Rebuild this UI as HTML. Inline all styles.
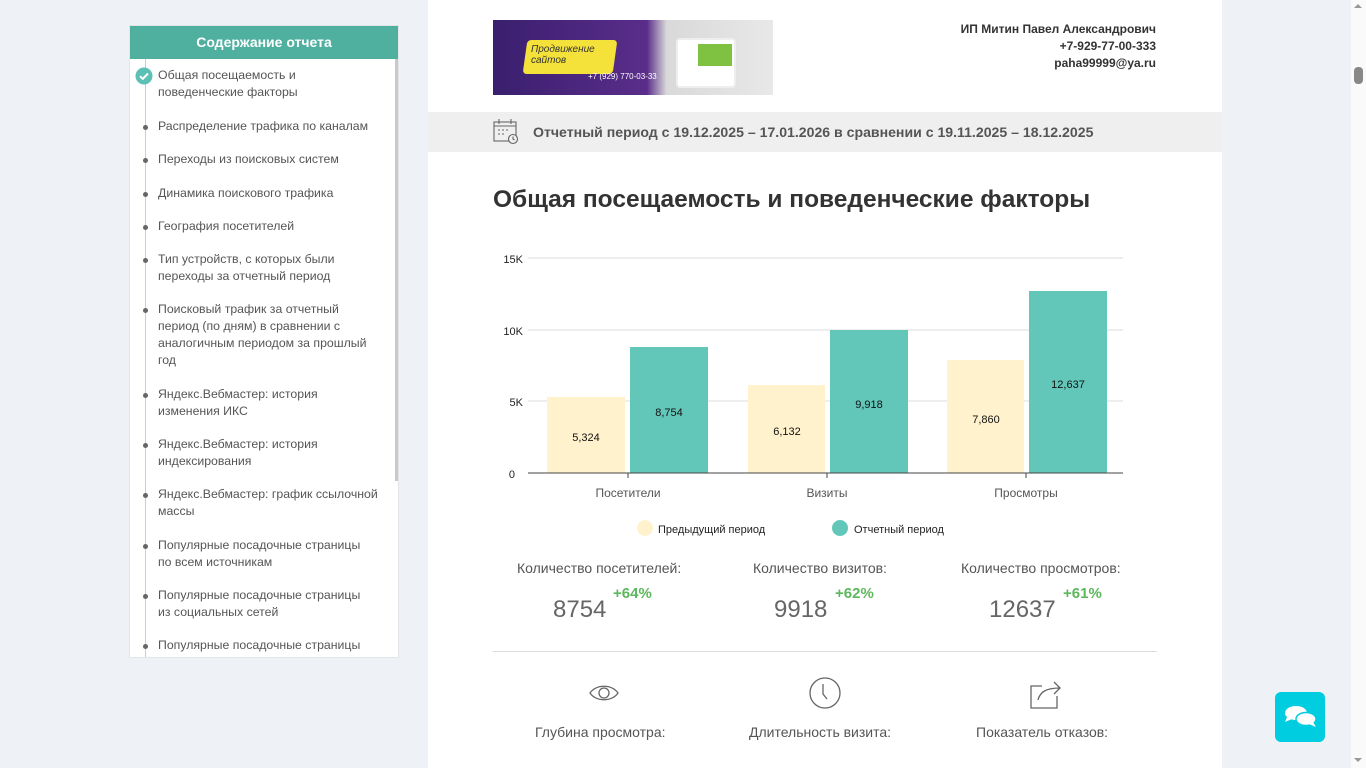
<!DOCTYPE html>
<html><head><meta charset="utf-8">
<style>
*{margin:0;padding:0;box-sizing:border-box}
body{width:1366px;height:768px;overflow:hidden;background:#eef2f7;font-family:"Liberation Sans","DejaVu Sans",sans-serif;position:relative;color:#444}
.abs{position:absolute}
#side{left:129px;top:25px;width:270px;height:633px;background:#fff;border:1px solid #e2e6ea;overflow:hidden}
#side .hd{height:33px;background:#4fb0a0;color:#fff;font-weight:bold;font-size:14px;text-align:center;line-height:33px}
#side .vl{left:15px;top:33px;width:1px;height:600px;background:#ccc}
#side .sb{left:265px;top:33px;width:4px;height:422px;background:#c9c9c9}
.it{position:absolute;left:28px;font-size:12.3px;line-height:17px;color:#555;width:232px}
.it:before{content:"";position:absolute;left:-15px;top:7px;width:5px;height:5px;border-radius:50%;background:#666}
.it.ck:before{display:none}
#main{left:428px;top:0;width:794px;height:768px;background:#fff}
.chat{left:1275px;top:692px;width:50px;height:50px;border-radius:6px;background:#00cde0}
#scroll{left:1351px;top:0;width:15px;height:768px;background:#fafafa}
</style></head><body>
<div id="side" class="abs">
<div class="hd">Содержание отчета</div>
<div class="abs vl"></div><div class="abs sb"></div>
<svg class="abs" style="left:5px;top:41px" width="18" height="18"><circle cx="9" cy="9" r="8.5" fill="#5cc0b4"/><path d="M5 9.2l2.8 2.6L13 6.5" stroke="#fff" stroke-width="2" fill="none"/></svg>
<div class="it ck" style="top:41px">Общая посещаемость и<br>поведенческие факторы</div>
<div class="it" style="top:92px">Распределение трафика по каналам</div>
<div class="it" style="top:125px">Переходы из поисковых систем</div>
<div class="it" style="top:159px">Динамика поискового трафика</div>
<div class="it" style="top:192px">География посетителей</div>
<div class="it" style="top:225px">Тип устройств, с которых были<br>переходы за отчетный период</div>
<div class="it" style="top:275px">Поисковый трафик за отчетный<br>период (по дням) в сравнении с<br>аналогичным периодом за прошлый<br>год</div>
<div class="it" style="top:360px">Яндекс.Вебмастер: история<br>изменения ИКС</div>
<div class="it" style="top:410px">Яндекс.Вебмастер: история<br>индексирования</div>
<div class="it" style="top:460px">Яндекс.Вебмастер: график ссылочной<br>массы</div>
<div class="it" style="top:511px">Популярные посадочные страницы<br>по всем источникам</div>
<div class="it" style="top:561px">Популярные посадочные страницы<br>из социальных сетей</div>
<div class="it" style="top:611px">Популярные посадочные страницы</div>
</div>

<div id="main" class="abs">
<div class="abs" style="left:65px;top:20px;width:280px;height:75px;background:linear-gradient(90deg,#3a1f6e 0%,#5a2d8a 55%,#d9d9d9 62%,#e8e8e8 100%);overflow:hidden">
 <div class="abs" style="left:32px;top:20px;width:90px;height:34px;background:#f4e23a;transform:skewX(-8deg);border-radius:4px"></div>
 <div class="abs" style="left:38px;top:24px;font-size:10px;font-style:italic;color:#333;line-height:11px">Продвижение<br>сайтов</div>
 <div class="abs" style="left:95px;top:52px;font-size:8px;color:#fff">+7 (929) 770-03-33</div>
 <div class="abs" style="left:183px;top:18px;width:60px;height:50px;background:#fff;border-radius:4px;border:2px solid #eee"></div>
 <div class="abs" style="left:205px;top:24px;width:34px;height:22px;background:#7fc241"></div>
</div>
<div class="abs" style="right:66px;top:21px;text-align:right;font-size:12px;font-weight:bold;line-height:17px;color:#333">ИП Митин Павел Александрович<br>+7-929-77-00-333<br>paha99999@ya.ru</div>
<div class="abs" style="left:0;top:112px;width:794px;height:40px;background:#efefef"></div>
<svg class="abs" style="left:65px;top:119px" width="28" height="26" fill="none" stroke="#666" stroke-width="1.1"><rect x="1" y="3" width="22" height="19"/><path d="M1 7h22M6 0v5M18 0v5"/><path d="M5 11h2M9 11h2M13 11h2M5 15h2M9 15h2"/><circle cx="20" cy="20" r="4.5" fill="#efefef"/><path d="M20 17.5v2.5l1.5 1"/></svg>
<div class="abs" style="left:105px;top:124px;font-size:14.1px;font-weight:bold;color:#555">Отчетный период с 19.12.2025 – 17.01.2026 в сравнении с 19.11.2025 – 18.12.2025</div>
<div class="abs" style="left:65px;top:186px;font-size:24.5px;font-weight:bold;color:#333">Общая посещаемость и поведенческие факторы</div>

<svg class="abs" style="left:60px;top:245px" width="680" height="300" font-family="Liberation Sans,sans-serif" font-size="11">
 <g stroke="#ddd"><line x1="40" y1="13" x2="635" y2="13"/><line x1="40" y1="85" x2="635" y2="85"/><line x1="40" y1="156" x2="635" y2="156"/></g>
 <g fill="#222" text-anchor="end"><text x="35" y="18">15K</text><text x="35" y="90">10K</text><text x="35" y="161">5K</text><text x="27" y="233">0</text></g>
 <g fill="#fff2cc"><rect x="59" y="152" width="78" height="76"/><rect x="260" y="140" width="77" height="88"/><rect x="459" y="115" width="77" height="113"/></g>
 <g fill="#62c6b9"><rect x="142" y="102" width="78" height="126"/><rect x="342" y="85" width="78" height="143"/><rect x="541" y="46" width="78" height="182"/></g>
 <line x1="40" y1="228" x2="635" y2="228" stroke="#444"/>
 <g stroke="#444"><line x1="140" y1="228" x2="140" y2="233"/><line x1="339" y1="228" x2="339" y2="233"/><line x1="538" y1="228" x2="538" y2="233"/></g>
 <g fill="#111" text-anchor="middle"><text x="98" y="196">5,324</text><text x="181" y="171">8,754</text><text x="299" y="190">6,132</text><text x="381" y="163">9,918</text><text x="498" y="178">7,860</text><text x="580" y="143">12,637</text></g>
 <g fill="#555" text-anchor="middle" font-size="12"><text x="140" y="252">Посетители</text><text x="339" y="252">Визиты</text><text x="538" y="252">Просмотры</text></g>
 <circle cx="157" cy="283" r="8" fill="#fff2cc"/><text x="170" y="288" fill="#222">Предыдущий период</text>
 <circle cx="352" cy="283" r="8" fill="#62c6b9"/><text x="366" y="288" fill="#222">Отчетный период</text>
</svg>

<div class="abs" style="left:65px;top:560px;width:664px;font-size:14px;color:#555">
 <div class="abs" style="left:24px;top:0">Количество посетителей:</div>
 <div class="abs" style="left:260px;top:0">Количество визитов:</div>
 <div class="abs" style="left:468px;top:0">Количество просмотров:</div>
 <div class="abs" style="left:60px;top:36px;font-size:24px;color:#666">8754</div>
 <div class="abs" style="left:120px;top:25px;font-size:15px;font-weight:bold;color:#5cb85c">+64%</div>
 <div class="abs" style="left:281px;top:36px;font-size:24px;color:#666">9918</div>
 <div class="abs" style="left:342px;top:25px;font-size:15px;font-weight:bold;color:#5cb85c">+62%</div>
 <div class="abs" style="left:496px;top:36px;font-size:24px;color:#666">12637</div>
 <div class="abs" style="left:570px;top:25px;font-size:15px;font-weight:bold;color:#5cb85c">+61%</div>
</div>
<div class="abs" style="left:65px;top:651px;width:664px;height:1px;background:#ddd"></div>
<svg class="abs" style="left:160px;top:680px" width="34" height="26" fill="none" stroke="#666" stroke-width="1.3"><path d="M2 13C8 4 24 4 30 13C24 22 8 22 2 13Z"/><circle cx="16" cy="13" r="5"/></svg>
<svg class="abs" style="left:380px;top:676px" width="34" height="34" fill="none" stroke="#666" stroke-width="1.3"><circle cx="17" cy="17" r="15"/><path d="M15 8v10l4 5"/></svg>
<svg class="abs" style="left:600px;top:678px" width="36" height="32" fill="none" stroke="#666" stroke-width="1.3"><path d="M14 8H3v22h26V18"/><path d="M10 22c2-8 8-12 22-12M26 4l6 6-6 6"/></svg>
<div class="abs" style="left:107px;top:724px;font-size:14px;color:#555">Глубина просмотра:</div>
<div class="abs" style="left:321px;top:724px;font-size:14px;color:#555">Длительность визита:</div>
<div class="abs" style="left:548px;top:724px;font-size:14px;color:#555">Показатель отказов:</div>
</div>

<div class="abs chat"><svg class="abs" style="left:9px;top:12px" width="34" height="26" fill="#fff"><ellipse cx="12" cy="9" rx="11" ry="7"/><path d="M3 13l-2 5 7-3z"/><ellipse cx="22" cy="15" rx="10" ry="6.5" stroke="#00cde0" stroke-width="1.5"/><path d="M29 18l3 5-7-3z"/></svg></div>
<div id="scroll" class="abs"><div class="abs" style="left:3px;top:67px;width:9px;height:17px;border-radius:4px;background:#888"></div>
<div class="abs" style="left:3px;top:4px;border:4px solid transparent;border-bottom-color:#999;border-top:none"></div>
<div class="abs" style="left:3px;top:758px;border:4px solid transparent;border-top-color:#999;border-bottom:none"></div></div>
</body></html>
